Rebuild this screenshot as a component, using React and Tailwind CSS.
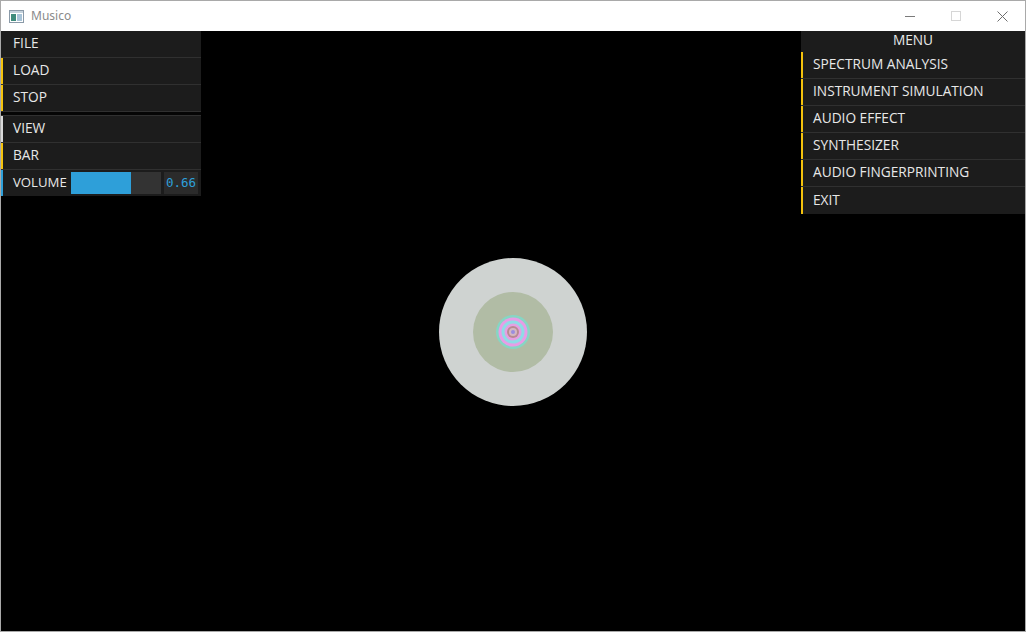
import React from 'react'

const leftTop = [
  { label: 'FILE', accent: 'bg-transparent' },
  { label: 'LOAD', accent: 'bg-[#f4c20d]' },
  { label: 'STOP', accent: 'bg-[#f4c20d]' },
]

const menuItems = [
  'SPECTRUM ANALYSIS',
  'INSTRUMENT SIMULATION',
  'AUDIO EFFECT',
  'SYNTHESIZER',
  'AUDIO FINGERPRINTING',
  'EXIT',
]

function Row({ label, accent, last }) {
  return (
    <div className={`flex h-[27px] ${last ? '' : 'border-b border-[#303030]'}`}>
      <div className={`w-[2px] ${accent}`}></div>
      <div className="flex items-center pl-[10px] pb-[1px] text-[13.7px] text-[#e8e8e8]">{label}</div>
    </div>
  )
}

function Visualizer() {
  return (
    <svg width="150" height="150" viewBox="-75 -75 150 150">
      <circle r="74" fill="#cfd3d1" />
      <circle r="40" fill="#b1bca5" />
      <circle r="17" fill="#86d6c4" />
      <circle r="14.5" fill="#e79de6" />
      <circle r="11.5" fill="#8fdbe6" />
      <circle r="8.5" fill="#e4a0e2" />
      <circle r="6" fill="#b88a92" />
      <circle r="4" fill="#d4b7c2" />
      <circle r="2" fill="#9a8de0" />
    </svg>
  )
}

export default function App() {
  return (
    <div className="w-[1026px] h-[632px] flex flex-col border border-[#a9a9a9] bg-white" style={{ fontFamily: '"Open Sans", "Noto Sans", sans-serif' }}>
      {/* TITLE BAR */}
      <div className="h-[30px] flex items-center justify-between bg-white shrink-0">
        <div className="flex items-center pl-[8px] gap-[7px]">
          <svg width="15" height="13" viewBox="0 0 15 13">
            <rect x="0.5" y="0.5" width="14" height="12" fill="#fff" stroke="#8a9aa8" />
            <rect x="1" y="1" width="13" height="2" fill="#c5d2dc" />
            <rect x="2" y="4" width="5" height="7" fill="#3f8c7c" />
            <rect x="8" y="4" width="5" height="7" fill="#a8c4d8" />
          </svg>
          <span className="text-[12px] text-[#8a8a8a]" style={{ fontFamily: '"Noto Sans", sans-serif' }}>Musico</span>
        </div>
        <div className="flex items-center h-full">
          <div className="w-[46px] h-full flex items-center justify-center">
            <div className="w-[10px] h-[1px] bg-[#7a7a7a]"></div>
          </div>
          <div className="w-[46px] h-full flex items-center justify-center">
            <div className="w-[10px] h-[10px] border border-[#d6d6d6]"></div>
          </div>
          <div className="w-[46px] h-full flex items-center justify-center">
            <svg width="11" height="11" viewBox="0 0 11 11">
              <path d="M0.5 0.5 L10.5 10.5 M10.5 0.5 L0.5 10.5" stroke="#6e6e6e" strokeWidth="1" />
            </svg>
          </div>
        </div>
      </div>

      {/* CANVAS */}
      <div className="relative flex-1 bg-black flex items-center justify-center">
        <div className="mt-[1px]">
          <Visualizer />
        </div>

        {/* LEFT PANEL */}
        <div className="absolute top-0 left-0 w-[200px]">
          <div className="bg-[#1c1c1c]">
            {leftTop.map((r) => (
              <Row key={r.label} label={r.label} accent={r.accent} />
            ))}
          </div>
          <div className="h-[3px] bg-[#050505]"></div>
          <div className="bg-[#1c1c1c] border-t border-[#303030]">
            <Row label="VIEW" accent="bg-[#d9d9d9]" />
            <Row label="BAR" accent="bg-[#f4c20d]" />
            <div className="flex h-[26px]">
              <div className="w-[2px] bg-[#2e9fd9]"></div>
              <div className="flex items-center pl-[10px] pb-[1px] text-[13.2px] text-[#e8e8e8] w-[68px]">VOLUME</div>
              <div className="flex items-center gap-[3px]">
                <div className="w-[90px] h-[22px] bg-[#333333] flex">
                  <div className="w-[60px] h-full bg-[#2e9fd9]"></div>
                </div>
                <div className="w-[34px] h-[22px] bg-[#2b2b2b] flex items-center justify-end pr-[2px] text-[12.5px] text-[#2e9fd9]" style={{ fontFamily: '"DejaVu Sans Mono", monospace' }}>0.66</div>
              </div>
            </div>
          </div>
        </div>

        {/* RIGHT PANEL */}
        <div className="absolute top-0 right-0 w-[224px] bg-[#1c1c1c]">
          <div className="h-[21px] flex items-center justify-center pb-[2px] text-[13.7px] text-[#e8e8e8]">MENU</div>
          {menuItems.map((m, i) => (
            <Row key={m} label={m} accent="bg-[#f4c20d]" last={i === menuItems.length - 1} />
          ))}
        </div>
      </div>
    </div>
  )
}
